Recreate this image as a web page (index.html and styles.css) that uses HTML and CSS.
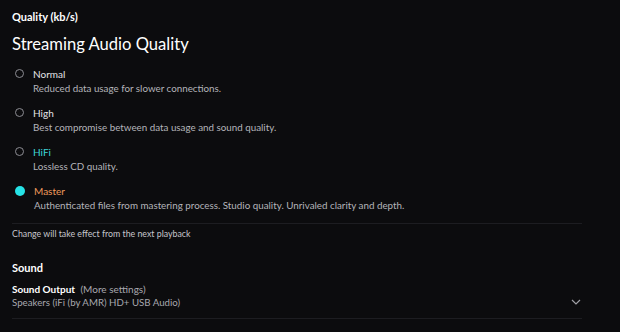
FILE: index.html
```html
<!DOCTYPE html>
<html lang="en">
<head>
    <meta charset="UTF-8">
    <meta name="viewport" content="width=device-width, initial-scale=1.0">
    <title>Settings - Streaming</title>
    <link rel="stylesheet" href="styles.css">
</head>
<body>
    <div class="settings">
        <!-- Quality section -->
        <div class="section-label">Quality (kb/s)</div>
        <h2 class="section-title">Streaming Audio Quality</h2>

        <div class="options">
            <div class="option">
                <span class="radio"></span>
                <div class="option-text">
                    <div class="option-name">Normal</div>
                    <div class="option-desc">Reduced data usage for slower connections.</div>
                </div>
            </div>
            <div class="option">
                <span class="radio"></span>
                <div class="option-text">
                    <div class="option-name">High</div>
                    <div class="option-desc">Best compromise between data usage and sound quality.</div>
                </div>
            </div>
            <div class="option">
                <span class="radio"></span>
                <div class="option-text">
                    <div class="option-name hifi">HiFi</div>
                    <div class="option-desc">Lossless CD quality.</div>
                </div>
            </div>
            <div class="option">
                <span class="radio checked"></span>
                <div class="option-text">
                    <div class="option-name master">Master</div>
                    <div class="option-desc">Authenticated files from mastering process. Studio quality. Unrivaled clarity and depth.</div>
                </div>
            </div>
        </div>

        <div class="note">Change will take effect from the next playback</div>

        <!-- Sound section -->
        <div class="section-label sound">Sound</div>
        <div class="output">
            <div class="output-text">
                <div class="output-title">Sound Output <span class="more">(More settings)</span></div>
                <div class="output-device">Speakers (iFi (by AMR) HD+ USB Audio)</div>
            </div>
            <svg class="chevron" width="10" height="6" viewBox="0 0 10 6">
                <path d="M1 1l4 4 4-4" fill="none" stroke="#a0a0a6" stroke-width="1.2"/>
            </svg>
        </div>
    </div>
</body>
</html>
```

FILE: styles.css
```css
/* Page */
body {
    margin: 0;
    padding: 0;
    background-color: #0c0c0e;
    color: #ececee;
    font-family: Lato, "Open Sans", sans-serif;
}

.settings {
    padding: 10px 38px 0 12px;
}

.section-label {
    font-size: 11px;
    font-weight: bold;
    line-height: 14px;
    color: #ffffff;
}

.section-title {
    margin: 9px 0 0;
    font-size: 16.6px;
    font-weight: normal;
    line-height: 22px;
    color: #ffffff;
}

/* Quality options */
.options {
    margin-top: 12px;
    padding-bottom: 11px;
    border-bottom: 1px solid #1d1d21;
    display: flex;
    flex-direction: column;
    gap: 11px;
}

.option {
    display: flex;
    align-items: flex-start;
    gap: 9px;
    padding-left: 3px;
}

.radio {
    box-sizing: border-box;
    width: 9px;
    height: 9px;
    margin-top: 2px;
    border: 1px solid #8c8c92;
    border-radius: 50%;
}

.radio.checked {
    width: 10px;
    height: 10px;
    margin-top: 2px;
    border: none;
    background-color: #26e3e6;
}

.option-name {
    font-size: 10px;
    line-height: 14px;
    color: #e4e4e8;
}

.option-name.hifi {
    color: #3ed6d8;
}

.option-name.master {
    color: #ef9a5c;
}

.option-desc {
    font-size: 9.8px;
    line-height: 14px;
    color: #b4b4ba;
}

.note {
    margin-top: 4px;
    font-size: 8.8px;
    line-height: 12px;
    color: #c6c6cc;
}

/* Sound section */
.section-label.sound {
    margin-top: 21px;
}

.output {
    margin-top: 8px;
    padding-bottom: 9px;
    border-bottom: 1px solid #1d1d21;
    display: flex;
    align-items: center;
    justify-content: space-between;
}

.output-title {
    font-size: 10px;
    font-weight: bold;
    line-height: 13px;
    color: #ffffff;
}

.output-title .more {
    margin-left: 3px;
    font-weight: normal;
    color: #a8a8ae;
}

.output-device {
    font-size: 9.7px;
    line-height: 13px;
    color: #a8a8ae;
}

.chevron {
    margin: 12px 1px 0 0;
}
```
